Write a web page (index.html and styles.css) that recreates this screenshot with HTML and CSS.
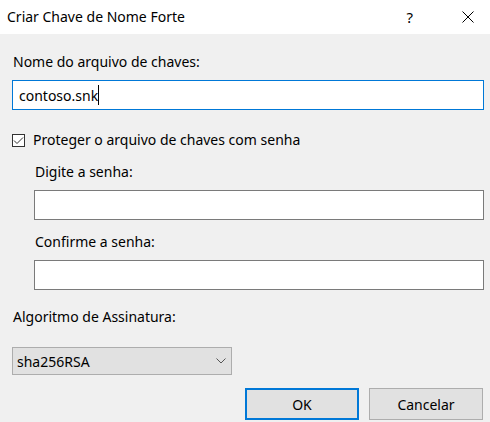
FILE: index.html
```html
<!DOCTYPE html>
<html lang="pt">
<head>
<meta charset="utf-8">
<title>Criar Chave de Nome Forte</title>
<link rel="stylesheet" href="styles.css">
</head>
<body>
<div class="dialog">
  <header class="titlebar">
    <span class="title">Criar Chave de Nome Forte</span>
    <span class="help">?</span>
    <svg class="close" width="12" height="12" viewBox="0 0 12 12"><path d="M0.5 0.5L11.5 11.5M11.5 0.5L0.5 11.5" stroke="#000" stroke-width="1" fill="none"/></svg>
  </header>
  <main class="content">
    <div class="label first">Nome do arquivo de chaves:</div>
    <div class="textbox focused"><span class="value">contoso.snk</span><span class="caret"></span></div>
    <div class="check">
      <span class="box"><svg width="11" height="11" viewBox="0 0 11 11"><path d="M1 5.5L4 8.5L10 2.5" stroke="#333" stroke-width="1" fill="none"/></svg></span>
      <span>Proteger o arquivo de chaves com senha</span>
    </div>
    <div class="indent">
      <div class="label sub">Digite a senha:</div>
      <div class="textbox"></div>
      <div class="label sub2">Confirme a senha:</div>
      <div class="textbox"></div>
    </div>
    <div class="label algo">Algoritmo de Assinatura:</div>
    <div class="combo">
      <span>sha256RSA</span>
      <svg width="10" height="6" viewBox="0 0 10 6"><path d="M0.5 0.5L5 5L9.5 0.5" stroke="#555" stroke-width="1" fill="none"/></svg>
    </div>
    <div class="buttons">
      <button class="btn default">OK</button>
      <button class="btn">Cancelar</button>
    </div>
  </main>
</div>
</body>
</html>
```
FILE: styles.css
```css
* { box-sizing: border-box; }
html, body { margin: 0; padding: 0; }
body {
  width: 490px;
  height: 422px;
  background: #f0f0f0;
  font-family: "Noto Sans", "Open Sans", sans-serif;
  font-size: 14px;
  color: #000;
  overflow: hidden;
}
.titlebar {
  height: 34px;
  background: #fff;
  display: flex;
  align-items: center;
  padding-left: 7px;
}
.title { flex: 1; font-size: 14px; line-height: 20px; }
.help { font-size: 15px; line-height: 20px; margin-right: 49px; }
.close { margin-right: 16px; }
.content {
  padding: 0 6px 0 12px;
  display: flex;
  flex-direction: column;
}
.label { line-height: 20px; }
.first { margin-top: 18px; margin-left: 1px; }
.textbox {
  height: 30px;
  background: #fff;
  border: 1px solid #7a7a7a;
  display: flex;
  align-items: center;
  padding-left: 6px;
}
.textbox.focused { border-color: #0078d7; margin-top: 8px; }
.caret { width: 1px; height: 20px; background: #000; }
.check {
  display: flex;
  align-items: center;
  margin-top: 20px;
  line-height: 20px;
  gap: 8px;
}
.box {
  width: 13px; height: 13px;
  border: 1px solid #333;
  background: #fff;
  display: flex;
  align-items: center;
  justify-content: center;
}
.indent { padding-left: 22px; display: flex; flex-direction: column; }
.sub { margin-top: 12px; margin-bottom: 8px; margin-left: 1px; }
.sub2 { margin-top: 12px; margin-bottom: 8px; margin-left: 1px; }
.algo { margin-top: 17px; margin-left: 1px; }
.combo {
  margin-top: 20px;
  width: 220px;
  height: 28px;
  background: #e1e1e1;
  border: 1px solid #adadad;
  display: flex;
  align-items: center;
  justify-content: space-between;
  padding: 0 5px 0 4px;
}
.buttons {
  display: flex;
  justify-content: flex-end;
  gap: 10px;
  margin-top: 13px;
  margin-right: 1px;
}
.btn {
  width: 114px;
  height: 32px;
  background: #e1e1e1;
  border: 1px solid #adadad;
  font-family: inherit;
  font-size: 14px;
  color: #000;
  padding: 0;
}
.btn.default { border: 2px solid #0078d7; }
```
